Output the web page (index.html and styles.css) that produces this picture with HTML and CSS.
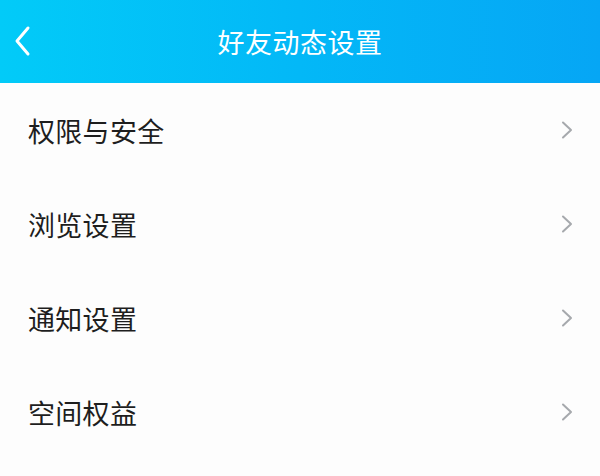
FILE: index.html
```html
<!DOCTYPE html>
<html lang="zh-CN">
<head>
<meta charset="utf-8">
<title>好友动态设置</title>
<link rel="stylesheet" href="styles.css">
</head>
<body>
<header class="topbar">
  <button class="back" aria-label="返回">
    <svg width="18" height="32" viewBox="0 0 18 32"><path d="M14 3 L3 16 L14 29" fill="none" stroke="#fff" stroke-width="3" stroke-linecap="round" stroke-linejoin="round"/></svg>
  </button>
  <h1 class="title">好友动态设置</h1>
</header>
<ul class="list">
  <li class="row"><span class="label">权限与安全</span><svg class="chev" width="12" height="18" viewBox="0 0 12 18"><path d="M2 1.5 L10 9 L2 16.5" fill="none" stroke="#a6a9ad" stroke-width="2" stroke-linecap="round" stroke-linejoin="round"/></svg></li>
  <li class="row"><span class="label">浏览设置</span><svg class="chev" width="12" height="18" viewBox="0 0 12 18"><path d="M2 1.5 L10 9 L2 16.5" fill="none" stroke="#a6a9ad" stroke-width="2" stroke-linecap="round" stroke-linejoin="round"/></svg></li>
  <li class="row"><span class="label">通知设置</span><svg class="chev" width="12" height="18" viewBox="0 0 12 18"><path d="M2 1.5 L10 9 L2 16.5" fill="none" stroke="#a6a9ad" stroke-width="2" stroke-linecap="round" stroke-linejoin="round"/></svg></li>
  <li class="row"><span class="label">空间权益</span><svg class="chev" width="12" height="18" viewBox="0 0 12 18"><path d="M2 1.5 L10 9 L2 16.5" fill="none" stroke="#a6a9ad" stroke-width="2" stroke-linecap="round" stroke-linejoin="round"/></svg></li>
</ul>
</body>
</html>
```
FILE: styles.css
```css
* { box-sizing: border-box; }
html, body { margin: 0; padding: 0; }
body {
  width: 600px;
  height: 476px;
  overflow: hidden;
  background: #fdfdfd;
  font-family: "Noto Sans CJK SC", "Noto Sans", sans-serif;
}
.topbar {
  position: relative;
  height: 83px;
  display: flex;
  align-items: center;
  justify-content: center;
  background: linear-gradient(90deg, #02cbf8 0%, #03b8f7 50%, #06a6f5 100%);
}
.back {
  position: absolute;
  left: 14px;
  top: 25px;
  padding: 0;
  border: 0;
  background: none;
  display: flex;
}
.title {
  margin: 0;
  font-size: 27px;
  font-weight: 400;
  color: #fff;
  letter-spacing: 0.5px;
}
.list {
  list-style: none;
  margin: 0;
  padding: 0;
}
.row {
  height: 94px;
  display: flex;
  align-items: center;
  justify-content: space-between;
  padding: 0 27px 0 28px;
}
.label {
  font-size: 27px;
  color: #1e1e1e;
  letter-spacing: 0.3px;
}
.chev { display: block; }
```
